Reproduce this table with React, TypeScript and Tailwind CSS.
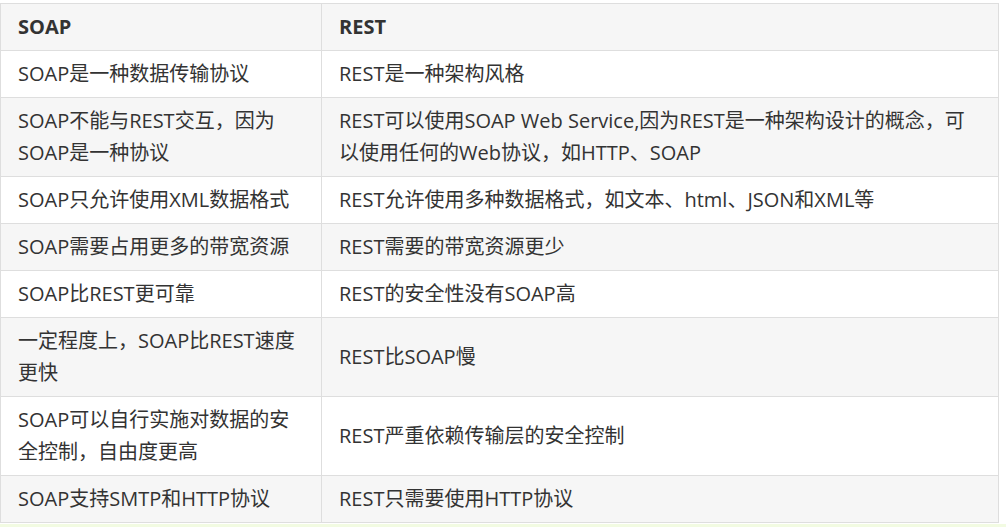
const rows: [React.ReactNode, React.ReactNode][] = [
  ["SOAP是一种数据传输协议", "REST是一种架构风格"],
  [
    <>SOAP不能与REST交互，因为<br />SOAP是一种协议</>,
    <>REST可以使用SOAP Web Service,因为REST是一种架构设计的概念，可<br />以使用任何的Web协议，如HTTP、SOAP</>,
  ],
  ["SOAP只允许使用XML数据格式", "REST允许使用多种数据格式，如文本、html、JSON和XML等"],
  ["SOAP需要占用更多的带宽资源", "REST需要的带宽资源更少"],
  ["SOAP比REST更可靠", "REST的安全性没有SOAP高"],
  [<>一定程度上，SOAP比REST速度<br />更快</>, "REST比SOAP慢"],
  [<>SOAP可以自行实施对数据的安<br />全控制，自由度更高</>, "REST严重依赖传输层的安全控制"],
  ["SOAP支持SMTP和HTTP协议", "REST只需要使用HTTP协议"],
];

const cell =
  "border border-[#dedede] text-left align-middle px-[17px] pt-[7px] pb-[7px] text-[20px] leading-[32px] text-[#333333] whitespace-nowrap";

export default function App() {
  return (
    <div
      className="w-[1006px] h-[527px] bg-white overflow-hidden flex flex-col text-[#333333]"
      style={{ fontFamily: '"Open Sans", "Noto Sans CJK SC", sans-serif' }}
    >
      <div className="pt-[3px] flex-none">
        <table className="w-[999px] border-collapse table-fixed">
          <colgroup>
            <col className="w-[321px]" />
            <col />
          </colgroup>
          <thead>
            <tr className="bg-[#f6f6f6]">
              <th className={cell + " font-bold"}>SOAP</th>
              <th className={cell + " font-bold"}>REST</th>
            </tr>
          </thead>
          <tbody>
            {rows.map(([a, b], i) => (
              <tr key={i} className={i % 2 === 1 ? "bg-[#f6f6f6]" : "bg-white"}>
                <td className={cell + " font-normal"}>{a}</td>
                <td className={cell + " font-normal"}>{b}</td>
              </tr>
            ))}
          </tbody>
        </table>
      </div>
      <div className="flex-1 mt-[1px] bg-[#f2fbe2]" />
    </div>
  );
}
